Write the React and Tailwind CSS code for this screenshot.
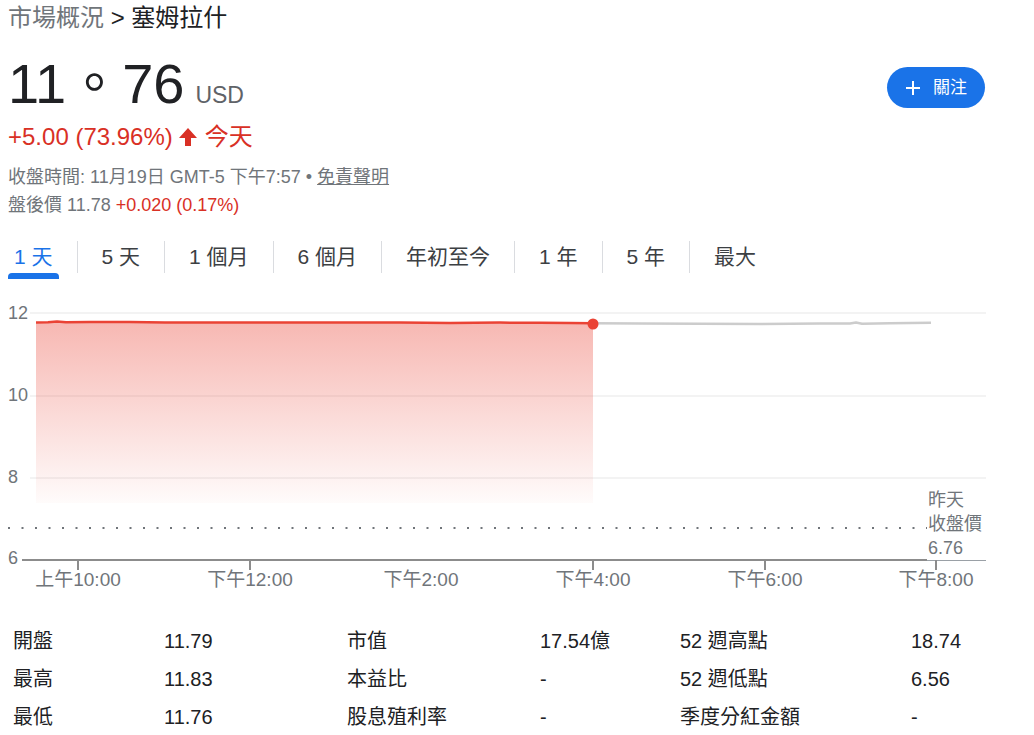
import React from 'react';

const font = "font-['Liberation_Sans','Noto_Sans_CJK_TC',sans-serif]";

const tabs = ['1 天', '5 天', '1 個月', '6 個月', '年初至今', '1 年', '5 年', '最大'];

const stats = [
  ['開盤', '11.79', '市值', '17.54億', '52 週高點', '18.74'],
  ['最高', '11.83', '本益比', '-', '52 週低點', '6.56'],
  ['最低', '11.76', '股息殖利率', '-', '季度分紅金額', '-'],
];

// price points (page x, page y) for the chart line
const redPts = [
  [36, 322.6], [48, 322.2], [57, 321.4], [66, 322.2], [90, 322], [130, 322.1], [165, 322.6],
  [200, 322.5], [260, 322.6], [330, 322.5], [400, 322.4], [450, 322.9], [500, 322.6],
  [540, 322.8], [570, 323], [593, 323.3],
];
const grayPts = [
  [593, 323.3], [640, 323.5], [700, 323.8], [760, 324], [820, 323.6], [850, 323.5],
  [856, 322.6], [862, 323.7], [890, 323.2], [931, 322.8],
];

const toPath = (pts) => pts.map((p, i) => `${i ? 'L' : 'M'}${p[0]} ${p[1] - 290}`).join(' ');

const Chart = () => {
  const fill = `${toPath(redPts)} L593 213 L36 213 Z`;
  const labelY = [['12', 23], ['10', 105], ['8', 187], ['6', 268]];
  const ticks = [
    [78, '上午10:00'], [250, '下午12:00'], [421, '下午2:00'], [593, '下午4:00'], [765, '下午6:00'], [936, '下午8:00'],
  ];
  return (
    <svg width="1034" height="310" className="block mt-[11px]" fontFamily="Liberation Sans, Noto Sans CJK TC, sans-serif">
      <defs>
        <linearGradient id="redFill" x1="0" y1="0" x2="0" y2="1">
          <stop offset="0%" stopColor="#ea4335" stopOpacity="0.38" />
          <stop offset="100%" stopColor="#ea4335" stopOpacity="0.02" />
        </linearGradient>
      </defs>
      {[23, 106, 188].map((y) => (
        <line key={y} x1="30" x2="986" y1={y} y2={y} stroke="#efefef" strokeWidth="1.5" />
      ))}
      {labelY.map(([t, y]) => (
        <text key={t} x="8" y={y} dominantBaseline="central" fontSize="18" fill="#70757a">{t}</text>
      ))}
      <path d={fill} fill="url(#redFill)" />
      <line x1="8" x2="927" y1="238" y2="238" stroke="#70757a" strokeWidth="2" strokeDasharray="2 11.5" />
      <line x1="22" x2="927" y1="270" y2="270" stroke="#8c8c8c" strokeWidth="2" />
      <line x1="927" x2="986" y1="270.5" y2="270.5" stroke="#9aa0a6" strokeWidth="1" />
      {ticks.map(([x, t]) => (
        <g key={t}>
          {t !== '下午2:00' && <line x1={x} x2={x} y1="270" y2="280" stroke="#8c8c8c" strokeWidth="2" />}
          <text x={x} y="289" textAnchor="middle" dominantBaseline="central" fontSize="19" fill="#70757a">{t}</text>
        </g>
      ))}
      <path d={toPath(grayPts)} fill="none" stroke="#cccccc" strokeWidth="2.5" strokeLinejoin="round" />
      <path d={toPath(redPts)} fill="none" stroke="#ea4335" strokeWidth="2.5" strokeLinejoin="round" />
      <circle cx="593" cy="34" r="5.5" fill="#ea4335" />
      <text x="928" y="210" dominantBaseline="central" fontSize="18" fill="#70757a">昨天</text>
      <text x="928" y="234" dominantBaseline="central" fontSize="18" fill="#70757a">收盤價</text>
      <text x="928" y="258" dominantBaseline="central" fontSize="18" fill="#70757a">6.76</text>
    </svg>
  );
};

const App = () => {
  return (
    <div className={`w-[1034px] h-[735px] overflow-hidden bg-white ${font}`}>
      <div className="pl-2">
        {/* breadcrumb */}
        <div className="h-9 leading-9 text-[24px] text-[#70757a]">
          市場概況 <span className="text-[#202124]">&gt; 塞姆拉什</span>
        </div>

        {/* price + follow button */}
        <div className="h-[80px] flex justify-between">
          <div className="pt-[8px] leading-[80px] text-[#202124] flex items-baseline">
            <span className="text-[56px]">11。76</span>
            <span className="text-[23px] text-[#5f6368] ml-[11px]">USD</span>
          </div>
          <button className="mt-[31px] mr-[49px] w-[98px] h-[41px] rounded-full bg-[#1a73e8] text-white flex items-center justify-center gap-[12px] text-[17px]">
            <svg width="16" height="16" viewBox="0 0 16 16">
              <path d="M8 1v14M1 8h14" stroke="white" strokeWidth="2" />
            </svg>
            <span>關注</span>
          </button>
        </div>

        {/* change */}
        <div className="h-[42px] leading-[42px] text-[24px] text-[#d93025] flex items-center">
          <span>+5.00 (73.96%)</span>
          <svg width="20" height="20" viewBox="0 0 20 20" className="ml-[5px] mr-[7px]">
            <path d="M10 1 L19 11 H13 V19 H7 V11 H1 Z" fill="#d93025" />
          </svg>
          <span>今天</span>
        </div>

        {/* meta */}
        <div className="mt-[5px] h-7 leading-7 text-[18px] text-[#70757a]">
          收盤時間: 11月19日 GMT-5 下午7:57 • <span className="underline">免責聲明</span>
        </div>
        <div className="h-7 leading-7 text-[18px] text-[#70757a]">
          盤後價 11.78 <span className="text-[#d93025]">+0.020 (0.17%)</span>
        </div>

        {/* tabs */}
        <div className="mt-[22px] flex items-start">
          {tabs.map((t, i) => (
            <React.Fragment key={t}>
              {i > 0 && <div className="w-px h-8 bg-[#dadce0]" />}
              <div className={`flex flex-col items-center ${i === 0 ? 'mr-[18px]' : 'mx-[18px]'}`}>
                <div className={`h-8 leading-8 px-[6px] text-[21px] ${i === 0 ? 'text-[#1a73e8]' : 'text-[#3c4043]'}`}>{t}</div>
                <div className={`h-[6px] w-full rounded-t-[4px] ${i === 0 ? 'bg-[#1a73e8]' : ''}`} />
              </div>
            </React.Fragment>
          ))}
        </div>
      </div>

      <Chart />

      {/* stats */}
      <div className="mt-[22px] pl-[13px] text-[20px] text-[#202124]">
        {stats.map((row) => (
          <div key={row[0]} className="h-[38px] leading-[38px] grid grid-cols-[151px_183px_193px_140px_231px_1fr]">
            {row.map((c, j) => (
              <div key={j} className="whitespace-nowrap">{c}</div>
            ))}
          </div>
        ))}
      </div>
    </div>
  );
};

export default App;
